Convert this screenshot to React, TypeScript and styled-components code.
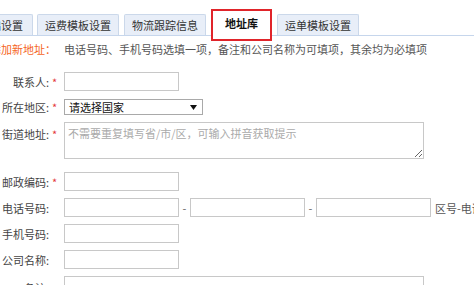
import React from 'react';
import styled, { createGlobalStyle } from 'styled-components';

const GlobalStyle = createGlobalStyle`
    html, body {
        margin: 0;
        padding: 0;
        background: #fff;
        overflow: hidden;
    }
    body {
        width: 474px;
        height: 285px;
        font-family: "Noto Sans CJK SC", "Noto Sans", sans-serif;
        font-size: 11px;
        color: #333;
    }
`;

const Page = styled.div`
    width: 474px;
    height: 285px;
    overflow: hidden;
`;

const TabBar = styled.div`
    display: flex;
    align-items: flex-end;
    height: 21px;
    margin-top: 14px;
    margin-left: -29px;
    border-bottom: 1px solid #c6d6ec;
`;

const Tab = styled.div<{ $active?: boolean }>`
    box-sizing: border-box;
    display: flex;
    align-items: center;
    justify-content: center;
    flex-shrink: 0;
    white-space: nowrap;
    margin-right: 5px;
    ${p => p.$active ? `
        height: 32px;
        margin-bottom: -6px;
        padding: 0 12px 4px;
        background: #fff;
        border: 2px solid #e0242a;
        color: #111;
        font-weight: bold;
    ` : `
        height: 21px;
        padding: 0 7px;
        background: #e8eef8;
        border: 1px solid #cbd8ea;
        border-bottom: none;
        border-radius: 2px 2px 0 0;
        color: #333;
    `}
    &:first-child {
        padding-right: 9px;
        margin-right: 4px;
    }
`;

const Form = styled.div`
    display: flex;
    flex-direction: column;
    margin-left: -14px;
`;

const Row = styled.div<{ $gap: number; $top?: boolean }>`
    display: grid;
    grid-template-columns: 63px 15px max-content;
    align-items: ${p => (p.$top ? 'start' : 'center')};
    margin-top: ${p => p.$gap}px;
    white-space: nowrap;
`;

const Title = styled.div`
    grid-column: 1 / span 2;
    text-align: right;
    padding-right: 8px;
    color: #f5651e;
    line-height: 14px;
`;

const Hint = styled.div`
    color: #555;
    line-height: 14px;
`;

const Label = styled.div<{ $top?: boolean }>`
    text-align: right;
    color: #444;
    line-height: 14px;
    padding-top: ${p => (p.$top ? 5 : 0)}px;
`;

const Star = styled.span<{ $top?: boolean }>`
    color: #e4393c;
    padding-left: 3px;
    line-height: 14px;
    padding-top: ${p => (p.$top ? 5 : 0)}px;
`;

const Fields = styled.div`
    display: flex;
    align-items: center;
`;

const TextInput = styled.input`
    box-sizing: border-box;
    width: 115px;
    height: 19px;
    margin: 0;
    padding: 0 3px;
    border: 1px solid #c8c8c8;
    font: inherit;
    outline: none;
`;

const Dash = styled.span`
    width: 11px;
    text-align: center;
    color: #666;
`;

const Suffix = styled.span`
    margin-left: 4px;
    color: #555;
`;

const SelectBox = styled.div`
    box-sizing: border-box;
    display: flex;
    align-items: center;
    justify-content: space-between;
    width: 139px;
    height: 16px;
    padding: 0 5px 0 4px;
    border: 1px solid #a9a9a9;
    background: #fff;
    color: #111;
`;

const TextArea = styled.textarea`
    box-sizing: border-box;
    display: block;
    width: 360px;
    height: 37px;
    margin: 0;
    padding: 2px 3px;
    border: 1px solid #c8c8c8;
    font: inherit;
    color: #333;
    outline: none;
    &::placeholder {
        color: #aaa;
    }
`;

function Arrow() {
    return (
        <svg width="7" height="5" viewBox="0 0 7 5">
            <path d="M0 0 H7 L3.5 5 Z" fill="#111" />
        </svg>
    );
}

function FieldLabel({ text, required, top }: { text: string; required?: boolean; top?: boolean }) {
    return (
        <>
            <Label $top={top}>{text}</Label>
            <Star $top={top}>{required ? '*' : ''}</Star>
        </>
    );
}

const tabs = ['基础设置', '运费模板设置', '物流跟踪信息', '地址库', '运单模板设置'];

export default function App() {
    return (
        <Page>
            <GlobalStyle />
            <TabBar>
                {tabs.map(t => (
                    <Tab key={t} $active={t === '地址库'}>{t}</Tab>
                ))}
            </TabBar>
            <Form>
                <Row $gap={6}>
                    <Title>添加新地址：</Title>
                    <Hint>电话号码、手机号码选填一项，备注和公司名称为可填项，其余均为必填项</Hint>
                </Row>
                <Row $gap={16}>
                    <FieldLabel text="联系人:" required />
                    <TextInput />
                </Row>
                <Row $gap={8}>
                    <FieldLabel text="所在地区:" required />
                    <SelectBox>
                        <span>请选择国家</span>
                        <Arrow />
                    </SelectBox>
                </Row>
                <Row $gap={7} $top>
                    <FieldLabel text="街道地址:" required top />
                    <TextArea placeholder="不需要重复填写省/市/区，可输入拼音获取提示" />
                </Row>
                <Row $gap={13}>
                    <FieldLabel text="邮政编码:" required />
                    <TextInput />
                </Row>
                <Row $gap={7}>
                    <FieldLabel text="电话号码:" />
                    <Fields>
                        <TextInput />
                        <Dash>-</Dash>
                        <TextInput />
                        <Dash>-</Dash>
                        <TextInput />
                        <Suffix>区号-电话号码-分机号</Suffix>
                    </Fields>
                </Row>
                <Row $gap={7}>
                    <FieldLabel text="手机号码:" />
                    <TextInput />
                </Row>
                <Row $gap={7}>
                    <FieldLabel text="公司名称:" />
                    <TextInput />
                </Row>
                <Row $gap={7} $top>
                    <FieldLabel text="备注:" top />
                    <TextArea />
                </Row>
            </Form>
        </Page>
    );
}
